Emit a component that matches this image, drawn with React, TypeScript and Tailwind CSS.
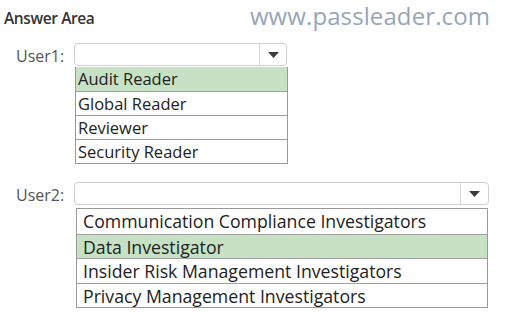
import React from "react";

const Arrow = () => (
  <svg width="11" height="6" viewBox="0 0 11 6">
    <polygon points="0,0 11,0 5.5,6" fill="#3a3a3a" />
  </svg>
);

function Dropdown({ w, arrowW }: { w: string; arrowW: string }) {
  return (
    <div className={`${w} h-[23px] flex rounded-[4px] border border-[#cfcfcf] bg-white`}>
      <div className="flex-1" />
      <div className={`${arrowW} h-full border-l border-[#d6d6d6] flex items-center justify-center`}>
        <Arrow />
      </div>
    </div>
  );
}

export default function App() {
  const list1 = ["Audit Reader", "Global Reader", "Reviewer", "Security Reader"];
  const list2 = [
    "Communication Compliance Investigators",
    "Data Investigator",
    "Insider Risk Management Investigators",
    "Privacy Management Investigators",
  ];
  return (
    <div
      className="w-[505px] h-[323px] bg-white overflow-hidden text-[#222]"
      style={{ fontFamily: '"Open Sans", "Noto Sans", sans-serif' }}
    >
      <div className="h-[43px] flex items-start justify-between">
        <div className="pl-[4px] pt-[7px] text-[15.5px] leading-[22px] font-semibold text-[#333] tracking-[-0.4px]">Answer Area</div>
        <div className="pr-[15px] pt-[2px] text-[24px] leading-[28px] text-[#97a5b8] tracking-[0.1px]">
          www.passleader.com
        </div>
      </div>

      <div className="flex">
        <div className="w-[74px] pl-[16px] pt-[1px] text-[16px] text-[#555]">User1:</div>
        <div className="flex flex-col">
          <Dropdown w="w-[213px]" arrowW="w-[27px]" />
          <div className="mt-[1px] ml-[1px] w-[213px] border border-[#999] border-t-0">
            {list1.map((t, i) => (
              <div
                key={t}
                className={`h-[24px] pl-[2px] text-[16.5px] leading-[24px] ${i > 0 ? "border-t border-[#a0a0a0]" : ""} ${i === 0 ? "bg-[#c6e1c4]" : ""}`}
              >
                {t}
              </div>
            ))}
          </div>
        </div>
      </div>

      <div className="flex mt-[18px]">
        <div className="w-[74px] pl-[16px] pt-[1px] text-[16px] text-[#555]">User2:</div>
        <div className="flex flex-col">
          <Dropdown w="w-[415px]" arrowW="w-[28px]" />
          <div className="mt-[3px] ml-[2px] w-[412px] border border-[#999]">
            {list2.map((t, i) => (
              <div
                key={t}
                className={`h-[24.5px] pl-[6px] text-[17.7px] leading-[24px] ${i > 0 ? "border-t border-[#a0a0a0]" : ""} ${i === 1 ? "bg-[#c6e1c4]" : ""}`}
              >
                {t}
              </div>
            ))}
          </div>
        </div>
      </div>
    </div>
  );
}
